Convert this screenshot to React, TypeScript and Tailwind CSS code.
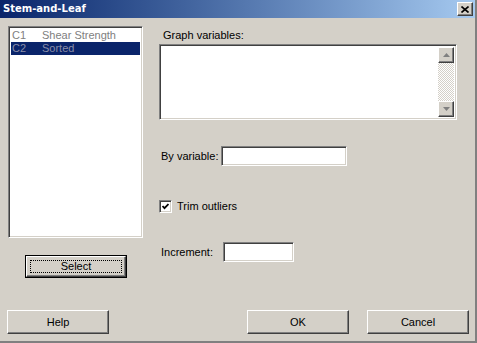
import React from 'react';

const sunken =
  'border border-t-[#808080] border-l-[#808080] border-r-white border-b-white shadow-[inset_1px_1px_0_#404040,inset_-1px_-1px_0_#d4d0c8]';
const raised =
  'border border-t-white border-l-white border-r-[#404040] border-b-[#404040] shadow-[inset_-1px_-1px_0_#808080]';

function ScrollArrow({ down }: { down?: boolean }) {
  return (
    <div className={`w-[16px] h-[16px] bg-[#d4d0c8] flex items-center justify-center ${raised}`}>
      <svg width="7" height="4" viewBox="0 0 7 4">
        {down ? <polygon points="0,0 7,0 3.5,4" fill="#808080" /> : <polygon points="0,4 7,4 3.5,0" fill="#808080" />}
      </svg>
    </div>
  );
}

function Button({ label, className = '' }: { label: string; className?: string }) {
  return (
    <div className={`w-[102px] h-[24px] bg-[#d4d0c8] flex items-center justify-center text-black ${raised} ${className}`}>
      {label}
    </div>
  );
}

export default function App() {
  return (
    <div className="w-[477px] h-[343px] bg-[#d4d0c8] font-['Liberation_Sans',Arial,sans-serif] text-[11px] leading-[13px] text-black border-b-2 border-b-[#808080] border-r-2 border-r-[#808080] overflow-hidden select-none">
      {/* title bar */}
      <div className="h-[18px] bg-gradient-to-r from-[#0a246a] to-[#a6caf0] flex items-center justify-between pl-[3px] pr-[2px]">
        <span className="text-white font-bold text-[10px] leading-none font-['DejaVu_Sans',sans-serif]">Stem-and-Leaf</span>
        <div className={`w-[16px] h-[14px] bg-[#d4d0c8] flex items-center justify-center ${raised}`}>
          <svg width="8" height="7" viewBox="0 0 8 7">
            <path d="M0.5 0.5 L7.5 6.5 M7.5 0.5 L0.5 6.5" stroke="#000" strokeWidth="1.6" />
          </svg>
        </div>
      </div>

      <div className="flex">
        {/* left column */}
        <div className="flex flex-col pl-[8px] pt-[8px] shrink-0">
          <div className={`w-[135px] h-[212px] bg-white pt-[2px] px-[2px] ${sunken}`}>
            <div className="h-[13px] flex items-center text-[#808080] leading-none">
              <span className="w-[31px] pl-[1px]">C1</span>
              <span>Shear Strength</span>
            </div>
            <div className="h-[13px] flex items-center bg-[#0a246a] text-[#8a8ea8] leading-none">
              <span className="w-[31px] pl-[1px]">C2</span>
              <span>Sorted</span>
            </div>
          </div>
          <div className="ml-[17px] mt-[17px] w-[102px] h-[23px] border border-black">
            <div className={`w-full h-full bg-[#d4d0c8] p-[3px] ${raised}`}>
              <div className="w-full h-full border border-dotted border-black flex items-center justify-center">
                Select
              </div>
            </div>
          </div>
        </div>

        {/* right column */}
        <div className="flex flex-col ml-[16px] pt-[10px] whitespace-nowrap">
          <div className="ml-[4px] h-[14px] leading-[14px]">Graph variables:</div>
          <div className={`mt-[2px] w-[298px] h-[76px] bg-white flex justify-end p-[2px] ${sunken}`}>
            <div className="w-[16px] h-full flex flex-col justify-between bg-[repeating-conic-gradient(#d4d0c8_0_25%,#ffffff_0_50%)] bg-[length:2px_2px]">
              <ScrollArrow />
              <ScrollArrow down />
            </div>
          </div>

          <div className="mt-[26px] flex items-center">
            <span className="ml-[2px] w-[60px] shrink-0">By variable:</span>
            <div className={`w-[126px] h-[20px] bg-white ${sunken}`} />
          </div>

          <div className="mt-[34px] flex items-center">
            <div className={`w-[13px] h-[13px] bg-white flex items-center justify-center ${sunken}`}>
              <svg width="7" height="7" viewBox="0 0 7 7">
                <path d="M0.5 3 L2.5 5.2 L6.5 1" stroke="#000" strokeWidth="1.8" fill="none" />
              </svg>
            </div>
            <span className="ml-[5px]">Trim outliers</span>
          </div>

          <div className="mt-[29px] flex items-center">
            <span className="ml-[2px] w-[62px] shrink-0">Increment:</span>
            <div className={`w-[71px] h-[20px] bg-white ${sunken}`} />
          </div>
        </div>
      </div>

      {/* bottom buttons */}
      <div className="flex mt-[32px] pl-[7px]">
        <Button label="Help" />
        <Button label="OK" className="ml-[138px]" />
        <Button label="Cancel" className="ml-[18px]" />
      </div>
    </div>
  );
}
